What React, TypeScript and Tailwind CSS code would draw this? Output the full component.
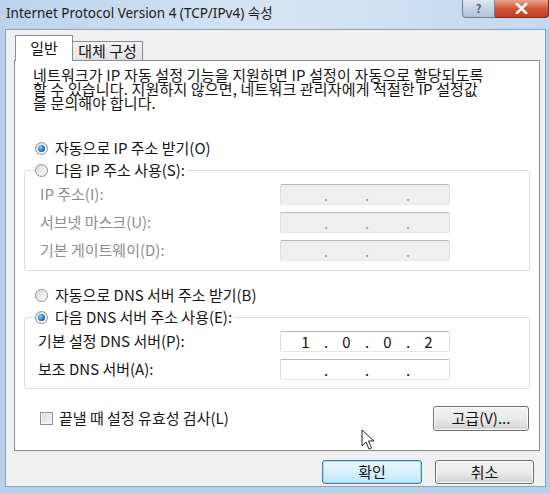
import React from 'react'

const FONT = "font-['Noto_Sans_CJK_KR','Noto_Sans',sans-serif]"

function Radio({ checked = false }: { checked?: boolean }) {
  return (
    <span className="relative flex w-[13px] h-[13px] shrink-0 items-center justify-center rounded-full border border-[#8e8f8f] bg-gradient-to-br from-[#dcdcdc] to-[#fbfbfb]">
      {checked && (
        <span className="w-[7px] h-[7px] rounded-full bg-[radial-gradient(circle_at_35%_35%,#8fd3f8,#1c6fbf_60%,#0b3f82)]" />
      )}
    </span>
  )
}

function IpField({ values, disabled = false }: { values?: string[]; disabled?: boolean }) {
  const segs = values ?? ['', '', '', '']
  return (
    <div
      className={
        'flex h-[21px] w-[170px] items-center pl-[6px] rounded-[2px] border border-t-[#b9b9b9] border-x-[#dedede] border-b-[#e6e6e6] text-[15px] leading-none ' +
        (disabled ? 'bg-[#efefef] text-[#9a9a9a]' : 'bg-white text-[#111]')
      }
    >
      {segs.map((v, i) => (
        <React.Fragment key={i}>
          <span className="w-[37px] text-center">{v}</span>
          {i < 3 && <span className="w-[4px] text-center">.</span>}
        </React.Fragment>
      ))}
    </div>
  )
}

function Button({ label, focused = false, w }: { label: string; focused?: boolean; w: string }) {
  return (
    <div
      className={
        'flex h-[24px] items-center justify-center rounded-[3px] border text-[15px] text-[#111] ' +
        w +
        (focused
          ? ' border-[#3c7fb1] bg-gradient-to-b from-[#eaf6fd] via-[#d9f0fc] to-[#bee6fd] shadow-[inset_0_0_0_1px_#a7d9f5]'
          : ' border-[#707070] bg-gradient-to-b from-[#f2f2f2] via-[#ebebeb] to-[#d3d3d3] shadow-[inset_0_0_0_1px_#fcfcfc]')
      }
    >
      {label}
    </div>
  )
}

export default function App() {
  return (
    <div className={`relative flex h-[493px] w-[550px] flex-col overflow-hidden bg-[#b8d0ea] ${FONT}`}>
      {/* title bar */}
      <div className="relative flex h-[29px] shrink-0 items-start bg-gradient-to-r from-[#bcd3eb] via-[#d6e5f4] to-[#c3d8ee]">
        <span className="mt-[3px] pl-[6px] text-[13.5px] text-[#1b1b1b] font-['Noto_Sans','Noto_Sans_CJK_KR',sans-serif]">
          Internet Protocol Version 4 (TCP/IPv4) 속성
        </span>
        <div className="ml-auto mr-[1px] flex">
          <div className="flex h-[18px] w-[33px] items-center justify-center rounded-bl-[4px] border border-t-0 border-[#6d7f96] bg-gradient-to-b from-[#dfe8f2] via-[#c4d3e4] to-[#b1c5db] text-[11px] font-bold text-[#4a5d75]">
            ?
          </div>
          <div className="flex h-[18px] w-[54px] items-center justify-center rounded-br-[4px] border border-l-0 border-t-0 border-[#7d2a1b] bg-gradient-to-b from-[#e8a593] via-[#d2543a] to-[#c03c20]">
            <svg width="13" height="11" viewBox="0 0 13 11">
              <path d="M2 1 L11 10 M11 1 L2 10" stroke="#fff" strokeWidth="2.6" strokeLinecap="square" />
            </svg>
          </div>
        </div>
      </div>

      {/* client area */}
      <div className="ml-[5px] mr-[4px] flex h-[458px] flex-col border border-[#8aa3bf] bg-[#f0f0f0] px-[8px]">
        {/* tabs */}
        <div className="mt-[5px] flex h-[25px] items-end pl-[1px]">
          <div className="relative z-10 -mb-[1px] flex h-[26px] w-[58px] items-center justify-center border border-b-0 border-[#898c95] bg-white pb-[1px] text-[15px] text-[#111]">
            일반
          </div>
          <div className="flex h-[19px] w-[70px] items-center justify-center border border-b-0 border-l-0 border-[#898c95] bg-gradient-to-b from-[#f3f3f3] to-[#e3e3e3] text-[15px] text-[#111]">
            대체 구성
          </div>
        </div>

        {/* panel */}
        <div className="flex h-[391px] w-[526px] flex-col border border-[#898c95] bg-white px-[9px] text-[15px] text-[#151515]">
          <p className="mt-[7px] ml-[9px] whitespace-nowrap text-[15px] leading-[14px] tracking-[0.15px]">
            네트워크가 IP 자동 설정 기능을 지원하면 IP 설정이 자동으로 할당되도록
            <br />할 수 있습니다. 지원하지 않으면, 네트워크 관리자에게 적절한 IP 설정값
            <br />을 문의해야 합니다.
          </p>

          <div className="mt-[28px] ml-[11px] flex h-[20px] items-center gap-[7px]">
            <Radio checked />
            <span>자동으로 IP 주소 받기(O)</span>
          </div>

          <fieldset className="mt-[2px] rounded-[3px] border border-[#dcdcdc] px-[10px] pb-[9px]">
            <legend className="flex h-[20px] items-center gap-[7px] bg-white pr-[2px]">
              <Radio />
              <span>다음 IP 주소 사용(S):</span>
            </legend>
            <div className="mt-[4px] flex flex-col gap-[7px] text-[#8d8d8d]">
              {['IP 주소(I):', '서브넷 마스크(U):', '기본 게이트웨이(D):'].map((l) => (
                <div key={l} className="flex h-[21px] items-center justify-between pl-[5px] pr-[69px]">
                  <span>{l}</span>
                  <IpField disabled />
                </div>
              ))}
            </div>
          </fieldset>

          <div className="mt-[14px] ml-[11px] flex h-[20px] items-center gap-[7px]">
            <Radio />
            <span>자동으로 DNS 서버 주소 받기(B)</span>
          </div>

          <fieldset className="mt-[2px] rounded-[3px] border border-[#dcdcdc] px-[10px] pb-[8px]">
            <legend className="flex h-[20px] items-center gap-[7px] bg-white pr-[2px]">
              <Radio checked />
              <span>다음 DNS 서버 주소 사용(E):</span>
            </legend>
            <div className="mt-[4px] flex flex-col gap-[7px]">
              <div className="flex h-[21px] items-center justify-between pl-[3px] pr-[69px]">
                <span>기본 설정 DNS 서버(P):</span>
                <IpField values={['1', '0', '0', '2']} />
              </div>
              <div className="flex h-[21px] items-center justify-between pl-[3px] pr-[69px]">
                <span>보조 DNS 서버(A):</span>
                <IpField />
              </div>
            </div>
          </fieldset>

          <div className="mt-[17px] flex h-[25px] items-center justify-between pl-[16px] pr-[1px]">
            <div className="flex items-center gap-[6px]">
              <span className="h-[13px] w-[13px] border border-[#8e8f8f] bg-gradient-to-br from-[#d9d9d9] to-[#f7f7f7] shadow-[inset_0_0_0_1px_#f4f4f4]" />
              <span>끝낼 때 설정 유효성 검사(L)</span>
            </div>
            <Button label="고급(V)..." w="w-[96px] h-[25px]" />
          </div>
        </div>

        {/* bottom buttons */}
        <div className="mt-[9px] flex justify-end gap-[13px] pr-[3px]">
          <Button label="확인" focused w="w-[100px]" />
          <Button label="취소" w="w-[99px]" />
        </div>
      </div>

      {/* mouse pointer */}
      <svg className="absolute left-[361px] top-[429px]" width="14" height="22" viewBox="0 0 14 22">
        <path d="M1 1 L1 17 L5 13 L8 20 L10.5 19 L7.5 12 L13 12 Z" fill="#fff" stroke="#222" strokeWidth="1" strokeLinejoin="round" />
      </svg>
    </div>
  )
}
